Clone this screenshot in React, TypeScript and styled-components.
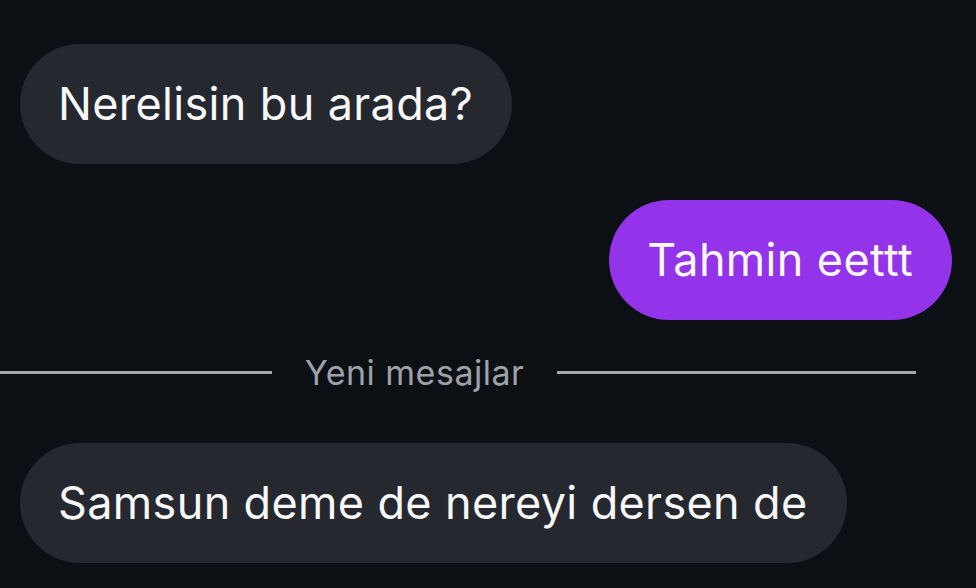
import React from "react";
import styled, { createGlobalStyle } from "styled-components";

const GlobalStyle = createGlobalStyle`
  html, body {
    margin: 0;
    padding: 0;
    background: #0c1015;
    overflow: hidden;
  }
  body {
    font-family: Inter, "Noto Sans", "Liberation Sans", sans-serif;
    -webkit-font-smoothing: antialiased;
  }
`;

const Thread = styled.main`
  display: flex;
  flex-direction: column;
  padding: 44px 24px 0 20px;
  min-height: 588px;
  box-sizing: border-box;
`;

const Row = styled.div<{ $mine?: boolean }>`
  display: flex;
  justify-content: ${(props) => (props.$mine ? "flex-end" : "flex-start")};
  margin-bottom: ${(props) => (props.$mine ? "32px" : "36px")};
`;

const Bubble = styled.div<{ $mine?: boolean }>`
  height: 120px;
  box-sizing: border-box;
  display: flex;
  align-items: center;
  padding: 0 39px 2px 38px;
  border-radius: 60px;
  background: ${(props) => (props.$mine ? "#9333ea" : "#25282e")};
  color: #f7f7f8;
  font-size: 45px;
  letter-spacing: 0.35px;
  white-space: nowrap;
`;

const Divider = styled.div`
  display: flex;
  align-items: center;
  gap: 33px;
  height: 40px;
  margin: 0 36px 51px -107px;
`;

const Line = styled.div`
  flex: 1;
  height: 3px;
  background: #a4a7ac;
`;

const DividerLabel = styled.span`
  color: #9ea2a8;
  font-size: 34px;
  letter-spacing: 0.5px;
`;

type Message = { id: number; text: string; mine?: boolean };

const before: Message[] = [
  { id: 1, text: "Nerelisin bu arada?" },
  { id: 2, text: "Tahmin eettt", mine: true },
];

const after: Message[] = [{ id: 3, text: "Samsun deme de nereyi dersen de" }];

const App = () => {
  return (
    <>
      <GlobalStyle />
      <Thread>
        {before.map((m) => (
          <Row key={m.id} $mine={m.mine}>
            <Bubble $mine={m.mine}>{m.text}</Bubble>
          </Row>
        ))}
        <Divider>
          <Line />
          <DividerLabel>Yeni mesajlar</DividerLabel>
          <Line />
        </Divider>
        {after.map((m) => (
          <Row key={m.id} $mine={m.mine}>
            <Bubble $mine={m.mine}>{m.text}</Bubble>
          </Row>
        ))}
      </Thread>
    </>
  );
};

export default App;
